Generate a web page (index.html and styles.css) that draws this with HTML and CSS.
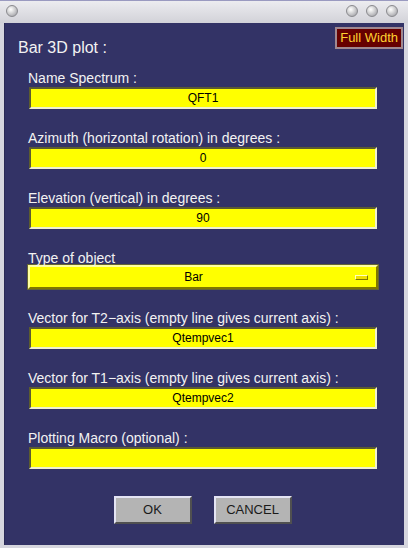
FILE: index.html
```html
<!DOCTYPE html>
<html>
<head>
<meta charset="utf-8">
<link rel="stylesheet" href="styles.css">
</head>
<body>
<div class="window">
  <div class="titlebar">
    <span class="knob"></span>
    <div class="knobs">
      <span class="knob"></span>
      <span class="knob"></span>
      <span class="knob"></span>
    </div>
  </div>
  <div class="content">
    <div class="header">
      <div class="title">Bar 3D plot :</div>
      <div class="fullwidth">Full Width</div>
    </div>
    <div class="form">
      <div class="group">
        <div class="label">Name Spectrum :</div>
        <div class="field">QFT1</div>
      </div>
      <div class="group">
        <div class="label">Azimuth (horizontal rotation) in degrees :</div>
        <div class="field">0</div>
      </div>
      <div class="group">
        <div class="label">Elevation (vertical) in degrees :</div>
        <div class="field">90</div>
      </div>
      <div class="group">
        <div class="label">Type of object</div>
        <div class="select"><span class="select-text">Bar</span><span class="indicator"></span></div>
      </div>
      <div class="group">
        <div class="label">Vector for T2&#8722;axis (empty line gives current axis) :</div>
        <div class="field">Qtempvec1</div>
      </div>
      <div class="group">
        <div class="label">Vector for T1&#8722;axis (empty line gives current axis) :</div>
        <div class="field">Qtempvec2</div>
      </div>
      <div class="group">
        <div class="label">Plotting Macro (optional) :</div>
        <div class="field"></div>
      </div>
    </div>
    <div class="buttons">
      <div class="btn">OK</div>
      <div class="btn">CANCEL</div>
    </div>
  </div>
</div>
</body>
</html>
```
FILE: styles.css
```css
html, body {
  margin: 0;
  padding: 0;
}
body {
  width: 408px;
  height: 548px;
  overflow: hidden;
  font-family: "Liberation Sans", Arial, sans-serif;
}
.window {
  width: 408px;
  height: 548px;
  box-sizing: border-box;
  background: #d6d6de;
  border-top: 1px solid #9a9ac0;
  display: flex;
  flex-direction: column;
}
.titlebar {
  height: 22px;
  box-sizing: border-box;
  background: linear-gradient(#ececf0, #d2d2d8);
  display: flex;
  align-items: center;
  justify-content: space-between;
  padding: 0 10px 3px 6px;
}
.knobs {
  display: flex;
  gap: 8px;
}
.knob {
  width: 12px;
  height: 12px;
  border-radius: 50%;
  box-sizing: border-box;
  border: 1px solid #8a8a8e;
  background: radial-gradient(circle at 38% 35%, #ffffff 0, #e6e6e6 25%, #b4b4b8 70%, #9a9a9e 100%);
}
.content {
  margin: 0 4px 0 4px;
  height: 522px;
  background: #333366;
  box-sizing: border-box;
  padding-top: 4px;
  border-left: 1px solid #2a2a55;
}
.header {
  display: flex;
  justify-content: space-between;
  align-items: flex-start;
  padding: 0 1px 0 13px;
  height: 30px;
}
.title {
  margin-top: 12px;
  font-size: 16px;
  line-height: 18px;
  color: #f2f2f2;
}
.fullwidth {
  height: 22px;
  box-sizing: border-box;
  padding: 0 3px;
  background: #660000;
  border: 2px solid #a08890;
  color: #ffd030;
  font-size: 13px;
  line-height: 18px;
}
.form {
  margin-top: 13px;
  padding: 0 27px 0 23px;
  display: flex;
  flex-direction: column;
  gap: 21px;
}
.label {
  font-size: 14px;
  line-height: 17px;
  color: #f2f2f2;
  white-space: nowrap;
}
.field {
  margin-left: 1px;
  height: 22px;
  box-sizing: border-box;
  background: #ffff00;
  border-style: solid;
  border-width: 2px;
  border-color: #5c5c30 #f0f0d0 #f0f0d0 #5c5c30;
  font-size: 12px;
  line-height: 18px;
  text-align: center;
  color: #000;
}
.select {
  margin: -2px -1px 0 0;
  height: 24px;
  box-sizing: border-box;
  background: #ffff00;
  border-style: solid;
  border-width: 2px;
  border-color: #ffffa0 #807800 #807800 #ffffa0;
  box-shadow: 0 0 0 1px #666633;
  display: flex;
  align-items: center;
  font-size: 12px;
  color: #000;
}
.select-text {
  flex: 1;
  text-align: center;
  padding-left: 2px;
}
.indicator {
  width: 13px;
  height: 5px;
  box-sizing: border-box;
  margin-right: 8px;
  border-style: solid;
  border-width: 1px;
  border-color: #ffffc0 #807800 #807800 #ffffc0;
  background: #f0e000;
}
.buttons {
  margin-top: 27px;
  display: flex;
  justify-content: center;
  gap: 22px;
  padding-right: 4px;
}
.btn {
  width: 78px;
  height: 28px;
  box-sizing: border-box;
  background: #b4b4b4;
  border-style: solid;
  border-width: 2px;
  border-color: #e4e4f4 #505050 #505050 #e4e4f4;
  font-size: 13px;
  line-height: 24px;
  text-align: center;
  color: #1a1a1a;
}
```
